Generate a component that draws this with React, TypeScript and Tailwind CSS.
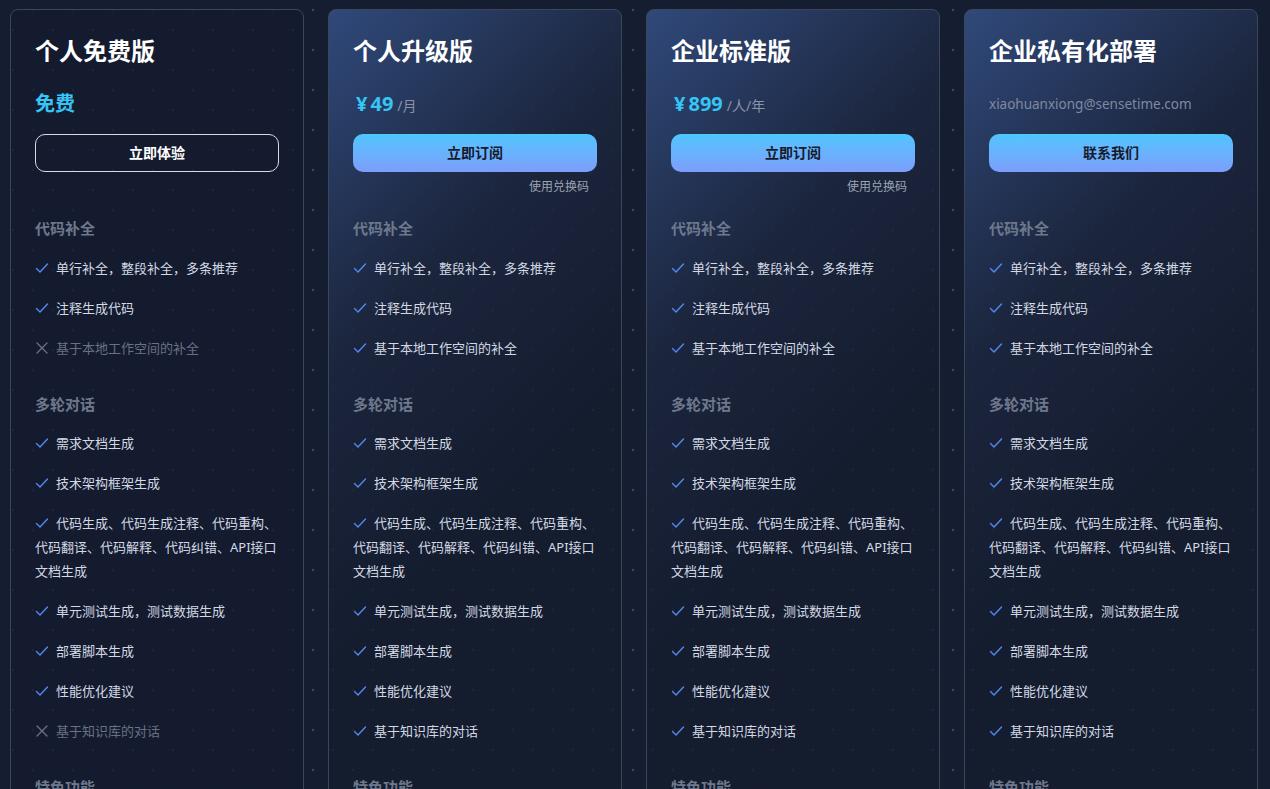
type Feature = { text: string; ok: boolean };
type Section = { title: string; items: Feature[] };
type Plan = {
  name: string;
  price?: { amount: string; unit: string; free?: boolean };
  email?: string;
  button: string;
  primary: boolean;
  redeem: boolean;
  highlight: boolean;
  sections: Section[];
};

const buildSections = (tier: number): Section[] => [
  {
    title: '代码补全',
    items: [
      { text: '单行补全，整段补全，多条推荐', ok: true },
      { text: '注释生成代码', ok: true },
      { text: '基于本地工作空间的补全', ok: tier > 0 },
    ],
  },
  {
    title: '多轮对话',
    items: [
      { text: '需求文档生成', ok: true },
      { text: '技术架构框架生成', ok: true },
      {
        text: '代码生成、代码生成注释、代码重构、代码翻译、代码解释、代码纠错、API接口文档生成',
        ok: true,
      },
      { text: '单元测试生成，测试数据生成', ok: true },
      { text: '部署脚本生成', ok: true },
      { text: '性能优化建议', ok: true },
      { text: '基于知识库的对话', ok: tier > 0 },
    ],
  },
  {
    title: '特色功能',
    items: [
      { text: '代码安全检测', ok: tier > 0 },
      { text: '团队管理', ok: tier > 1 },
    ],
  },
];

const plans: Plan[] = [
  {
    name: '个人免费版',
    price: { amount: '免费', unit: '', free: true },
    button: '立即体验',
    primary: false,
    redeem: false,
    highlight: false,
    sections: buildSections(0),
  },
  {
    name: '个人升级版',
    price: { amount: '49', unit: '/月' },
    button: '立即订阅',
    primary: true,
    redeem: true,
    highlight: true,
    sections: buildSections(1),
  },
  {
    name: '企业标准版',
    price: { amount: '899', unit: '/人/年' },
    button: '立即订阅',
    primary: true,
    redeem: true,
    highlight: true,
    sections: buildSections(2),
  },
  {
    name: '企业私有化部署',
    email: 'xiaohuanxiong@sensetime.com',
    button: '联系我们',
    primary: true,
    redeem: false,
    highlight: true,
    sections: buildSections(3),
  },
];

const CheckMark = () => (
  <svg viewBox="0 0 14 14" className="inline-block h-[14px] w-[14px] mr-[7px] -mt-[3px]" fill="none">
    <polyline points="1.5,7.5 5,11 12.5,3" stroke="#5289f0" strokeWidth="1.4" strokeLinecap="round" strokeLinejoin="round" />
  </svg>
);

const CrossMark = () => (
  <svg viewBox="0 0 14 14" className="inline-block h-[14px] w-[14px] mr-[7px] -mt-[3px]" fill="none">
    <path d="M2 2 L12 12 M12 2 L2 12" stroke="#6b7385" strokeWidth="1.3" strokeLinecap="round" />
  </svg>
);

const PlanCard = ({ plan }: { plan: Plan }) => {
  return (
    <div
      className={`w-[294px] shrink-0 rounded-[8px] border border-[#3b465d] px-6 pt-[25px] pb-10 ${
        plan.highlight
          ? 'bg-[linear-gradient(135deg,#30497a_0%,rgba(28,38,62,0.85)_30%,rgba(20,28,46,0.8)_55%)]'
          : 'bg-[#141c2f]/80'
      }`}
    >
      {/* Title */}
      <h2 className="text-2xl font-bold text-white leading-8">{plan.name}</h2>

      {/* Price */}
      <div className="mt-[23px] h-7 flex items-center">
        {plan.price?.free && (
          <span className="text-xl font-bold text-[#36c5f4] leading-7">{plan.price.amount}</span>
        )}
        {plan.price && !plan.price.free && (
          <div className="flex items-baseline pl-[3px]">
            <span className="text-xl font-bold text-[#36c5f4] leading-7">¥</span>
            <span className="text-xl font-bold text-[#36c5f4] leading-7 ml-[3px]">{plan.price.amount}</span>
            <span className="text-sm text-[#8a93a8] ml-1">{plan.price.unit}</span>
          </div>
        )}
        {plan.email && <span className="text-[13.5px] text-[#8089a0]">{plan.email}</span>}
      </div>

      {/* Action */}
      <button
        className={`mt-[16px] w-full h-[38px] rounded-[10px] text-sm font-bold ${
          plan.primary
            ? 'bg-linear-to-b from-[#4cc6ff] to-[#7c9dfb] text-[#161b2c]'
            : 'border border-[#d6dae3] text-white'
        }`}
      >
        {plan.button}
      </button>
      <div className="mt-[7px] h-4 flex justify-end pr-2">
        <span className={`text-xs leading-4 text-[#9aa3b5] ${plan.redeem ? '' : 'invisible'}`}>
          使用兑换码
        </span>
      </div>

      {/* Features */}
      {plan.sections.map((section, si) => (
        <div key={section.title} className={si === 0 ? 'mt-[22px]' : 'mt-[33px]'}>
          <h3 className="text-[15px] font-bold leading-[22px] text-[#6e788d]">{section.title}</h3>
          <ul className={`${si === 0 ? 'mt-[17px]' : 'mt-4'} flex flex-col gap-4`}>
            {section.items.map((item) => (
              <li
                key={item.text}
                className={`text-[13px] leading-6 ${item.ok ? 'text-[#d3d9e3]' : 'text-[#697184]'}`}
              >
                {item.ok ? <CheckMark /> : <CrossMark />}
                {item.text}
              </li>
            ))}
          </ul>
        </div>
      ))}
    </div>
  );
};

const App = () => {
  return (
    <div className="min-h-screen h-[789px] overflow-hidden bg-[#151d31] bg-[radial-gradient(circle_at_13px_30px,#3a4865_1px,transparent_1.6px),radial-gradient(circle_at_33px_10px,#3a4865_1px,transparent_1.6px)] bg-[length:40px_40px] font-['Noto_Sans','Noto_Sans_CJK_SC',sans-serif]">
      <div className="flex gap-6 px-[10px] pt-[9px]">
        {plans.map((plan) => (
          <PlanCard key={plan.name} plan={plan} />
        ))}
      </div>
    </div>
  );
};

export default App;
